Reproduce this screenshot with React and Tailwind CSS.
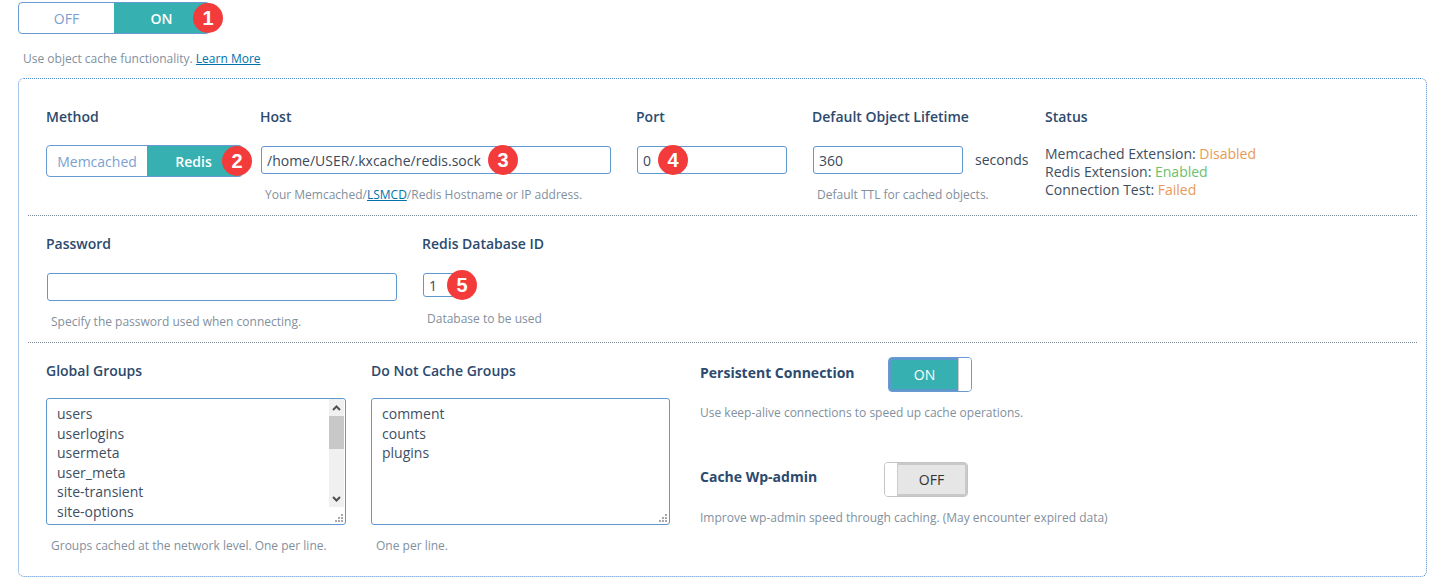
import React from 'react';

const Badge = ({ n, className }) => (
  <span className={`absolute flex h-[30px] w-[30px] items-center justify-center rounded-full bg-[#f33b3b] font-['Liberation_Sans',sans-serif] text-[20px] font-bold leading-none text-white ${className}`}>
    {n}
  </span>
);

const Label = ({ children, className = 'font-semibold' }) => (
  <div className={`h-5 text-[14px] leading-5 text-[#2c4a6e] ${className}`}>{children}</div>
);

const Help = ({ children, className = '' }) => (
  <div className={`h-4 whitespace-nowrap text-[12px] leading-4 text-[#82909e] ${className}`}>{children}</div>
);

const Input = ({ value, className = 'h-7' }) => (
  <div className={`flex items-center rounded-[3px] border border-[#5f97cf] bg-white px-[5px] text-[14px] text-[#3a4a5c] ${className}`}>
    {value}
  </div>
);

const Toggle = ({ left, right, className = '', leftClass, rightClass }) => (
  <div className={`flex overflow-hidden rounded-[4px] border border-[#6a9bd0] bg-white ${className}`}>
    <div className={`flex items-center justify-center text-[14px] text-[#7c9fd0] ${leftClass}`}>{left}</div>
    <div className={`flex items-center justify-center bg-[#36b0b0] text-[14px] font-semibold text-white ${rightClass}`}>{right}</div>
  </div>
);

const Grip = () => (
  <svg className="absolute bottom-[1px] right-[1px]" width="11" height="11" viewBox="0 0 11 11" fill="#a9a9a9">
    <rect x="8" y="2" width="2" height="2" />
    <rect x="5" y="5" width="2" height="2" />
    <rect x="8" y="5" width="2" height="2" />
    <rect x="2" y="8" width="2" height="2" />
    <rect x="5" y="8" width="2" height="2" />
    <rect x="8" y="8" width="2" height="2" />
  </svg>
);

const TextBox = ({ lines, scroll, className = '' }) => (
  <div className={`relative flex h-[127px] overflow-hidden rounded-[3px] border border-[#5f97cf] bg-white ${className}`}>
    <div className="flex-1 pl-[10px] pt-[5px] text-[14px] leading-[19.6px] text-[#3e4f63]">
      {lines.map((line) => (
        <div key={line}>{line}</div>
      ))}
    </div>
    {scroll && (
      <div className="mb-[17px] mr-[1px] flex w-[15px] flex-col bg-[#f0f0f0]">
        <div className="flex h-[17px] items-center justify-center">
          <svg width="9" height="6" viewBox="0 0 9 6" fill="none" stroke="#505050" strokeWidth="2"><path d="M1 5l3.5-3.5L8 5" /></svg>
        </div>
        <div className="h-[33px] bg-[#c8c8c8]" />
        <div className="flex-1" />
        <div className="flex h-[17px] items-center justify-center">
          <svg width="9" height="6" viewBox="0 0 9 6" fill="none" stroke="#505050" strokeWidth="2"><path d="M1 1l3.5 3.5L8 1" /></svg>
        </div>
      </div>
    )}
    <Grip />
  </div>
);

const Divider = () => <div className="mx-[9px] border-t border-dotted border-[#7b8a99]" />;

export default function App() {
  return (
    <div className="h-[586px] w-[1438px] overflow-hidden bg-white pl-[18px] pt-[2px] font-['Open_Sans',sans-serif]">
      {/* top switch */}
      <div className="relative h-8 w-[192px]">
        <Toggle left="OFF" right="ON" className="h-8 w-[192px]" leftClass="w-[95px]" rightClass="flex-1" />
        <Badge n="1" className="left-[175px] top-[1px]" />
      </div>
      <div className="ml-[5px] mt-[17px] h-4 text-[12px] leading-4 text-[#82909e]">
        Use object cache functionality. <a className="text-[#0073aa] underline">Learn More</a>
      </div>

      <div className="mt-[11px] h-[499px] w-[1409px] rounded-[6px] border border-dotted border-[#4f8fd0]">
        {/* connection row */}
        <div className="flex h-[136px] pl-[27px] pt-[28px]">
          <div className="w-[215px]">
            <Label>Method</Label>
            <div className="relative mt-[18px] w-[197px]">
              <Toggle left="Memcached" right="Redis" className="h-[32px] w-[197px]" leftClass="w-[100px]" rightClass="flex-1 pr-[2px]" />
              <Badge n="2" className="left-[176px] top-[1px]" />
            </div>
          </div>
          <div className="w-[376px]">
            <Label className="-ml-[1px] font-semibold">Host</Label>
            <div className="relative mt-[19px] w-[350px]">
              <Input value="/home/USER/.kxcache/redis.sock" />
              <Badge n="3" className="left-[227px] top-[-1px]" />
            </div>
            <Help className="ml-[4px] mt-[13px]">
              Your Memcached/<a className="text-[#0073aa] underline">LSMCD</a>/Redis Hostname or IP address.
            </Help>
          </div>
          <div className="w-[176px]">
            <Label className="-ml-[1px] font-semibold">Port</Label>
            <div className="relative mt-[19px] w-[150px]">
              <Input value="0" />
              <Badge n="4" className="left-[21px] top-[-1px]" />
            </div>
          </div>
          <div className="w-[232px]">
            <Label className="-ml-[1px] font-semibold">Default Object Lifetime</Label>
            <div className="mt-[19px] flex items-center">
              <Input value="360" className="h-7 w-[150px]" />
              <span className="-mt-[2px] ml-[12px] text-[14px] text-[#3a4a5c]">seconds</span>
            </div>
            <Help className="ml-[4px] mt-[13px]">Default TTL for cached objects.</Help>
          </div>
          <div>
            <Label>Status</Label>
            <div className="mt-[18px] text-[14px] leading-[18px] text-[#3e4f63]">
              <div>Memcached Extension: <span className="text-[#e8995a]">Disabled</span></div>
              <div>Redis Extension: <span className="text-[#6cbf6c]">Enabled</span></div>
              <div>Connection Test: <span className="text-[#e8995a]">Failed</span></div>
            </div>
          </div>
        </div>
        <Divider />

        {/* auth row */}
        <div className="flex h-[126px] pl-[27px] pt-[18px]">
          <div className="w-[376px]">
            <Label>Password</Label>
            <Input value="" className="ml-[1px] mt-[19px] h-7 w-[350px]" />
            <Help className="ml-[5px] mt-[13px]">Specify the password used when connecting.</Help>
          </div>
          <div>
            <Label>Redis Database ID</Label>
            <div className="relative ml-[1px] mt-[19px] w-[36px]">
              <Input value="1" className="h-6" />
              <Badge n="5" className="left-[24px] top-[-3px]" />
            </div>
            <Help className="ml-[5px] mt-[14px]">Database to be used</Help>
          </div>
        </div>
        <Divider />

        {/* groups row */}
        <div className="flex pl-[27px] pt-[18px]">
          <div className="w-[325px]">
            <Label>Global Groups</Label>
            <TextBox
              className="mt-[17px] w-[300px]"
              scroll
              lines={['users', 'userlogins', 'usermeta', 'user_meta', 'site-transient', 'site-options']}
            />
            <Help className="ml-[5px] mt-[13px]">Groups cached at the network level. One per line.</Help>
          </div>
          <div className="w-[329px]">
            <Label>Do Not Cache Groups</Label>
            <TextBox className="mt-[17px] w-[299px]" lines={['comment', 'counts', 'plugins']} />
            <Help className="ml-[5px] mt-[13px]">One per line.</Help>
          </div>
          <div>
            <div className="flex h-[35px] items-start">
              <Label className="mt-[2px] w-[188px] font-bold">Persistent Connection</Label>
              <div className="-mt-[4px] flex h-[35px] w-[84px] overflow-hidden rounded-[4px] border border-[#6a9bd0]">
                <div className="flex flex-1 items-center justify-center border-[2px] border-r-0 border-[#5f97cf] bg-[#36b0b0] text-[14px] text-white">ON</div>
                <div className="w-[13px] border-l border-[#cccccc] bg-white" />
              </div>
            </div>
            <Help className="mt-[9px]">Use keep-alive connections to speed up cache operations.</Help>
            <div className="mt-[45px] flex h-[35px] items-start">
              <Label className="mt-[1px] w-[184px] font-bold">Cache Wp-admin</Label>
              <div className="-mt-[4px] flex h-[35px] w-[84px] overflow-hidden rounded-[4px] border border-[#c4c4c4]">
                <div className="w-[13px] border-r border-[#cccccc] bg-white" />
                <div className="flex flex-1 items-center justify-center border-[2px] border-l-0 border-[#c9c9c9] bg-[#e6e6e6] text-[14px] text-[#333333]">OFF</div>
              </div>
            </div>
            <Help className="mt-[9px]">Improve wp-admin speed through caching. (May encounter expired data)</Help>
          </div>
        </div>
      </div>
    </div>
  );
}
